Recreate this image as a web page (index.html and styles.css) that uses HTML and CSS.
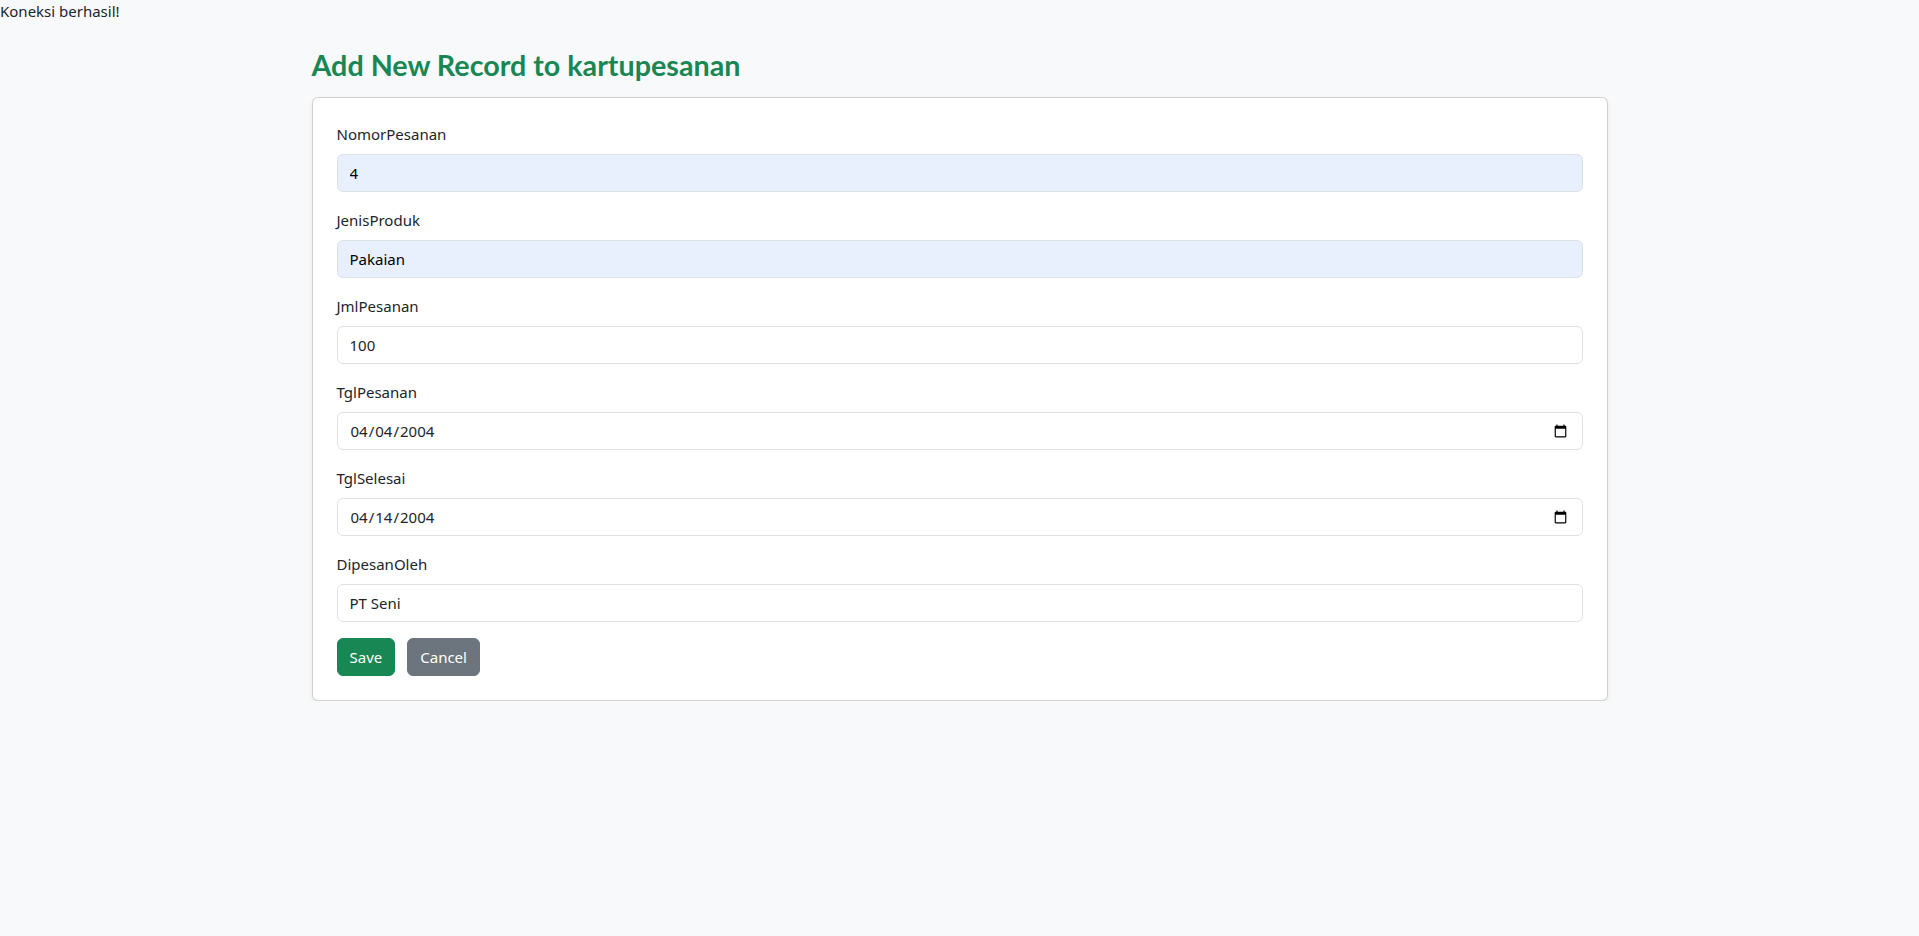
FILE: index.html
```html
<!DOCTYPE html>
<html lang="en">
<head>
<meta charset="utf-8">
<title>Add New Record</title>
<link rel="stylesheet" href="styles.css">
</head>
<body>
<div class="status">Koneksi berhasil!</div>
<div class="container">
  <h2 class="page-title">Add New Record to kartupesanan</h2>
  <form class="card">
    <div class="field">
      <label class="label" for="f1">NomorPesanan</label>
      <input class="input autofill" id="f1" type="text" value="4">
    </div>
    <div class="field">
      <label class="label" for="f2">JenisProduk</label>
      <input class="input autofill" id="f2" type="text" value="Pakaian">
    </div>
    <div class="field">
      <label class="label" for="f3">JmlPesanan</label>
      <input class="input" id="f3" type="text" value="100">
    </div>
    <div class="field">
      <label class="label" for="f4">TglPesanan</label>
      <input class="input" id="f4" type="date" value="2004-04-04">
    </div>
    <div class="field">
      <label class="label" for="f5">TglSelesai</label>
      <input class="input" id="f5" type="date" value="2004-04-14">
    </div>
    <div class="field">
      <label class="label" for="f6">DipesanOleh</label>
      <input class="input" id="f6" type="text" value="PT Seni">
    </div>
    <div class="actions">
      <button type="button" class="btn btn-save">Save</button>
      <button type="button" class="btn btn-cancel">Cancel</button>
    </div>
  </form>
</div>
</body>
</html>
```
FILE: styles.css
```css
* { box-sizing: border-box; }
html, body { margin: 0; }
body {
  background: #f8f9fa;
  color: #212529;
  font-family: "Noto Sans", "Open Sans", sans-serif;
  font-size: 16px;
  line-height: 1.5;
}
.status {
  height: 24px;
  font-size: 15px;
}
.container {
  max-width: 1320px;
  margin: 0 auto;
  padding: 22px 12px 0;
}
.page-title {
  margin: 0 0 13px;
  font-family: Lato, "Noto Sans", sans-serif;
  font-size: 28.7px;
  font-weight: 700;
  line-height: 38px;
  color: #198754;
}
.card {
  display: flex;
  flex-direction: column;
  gap: 16px;
  background: #fff;
  border: 1px solid rgba(0,0,0,.175);
  border-radius: 6px;
  box-shadow: 0 .125rem .25rem rgba(0,0,0,.075);
  padding: 24px;
  margin: 0;
}
.field { display: flex; flex-direction: column; gap: 8px; }
.label {
  font-size: 15px;
  line-height: 24px;
}
.input {
  display: block;
  width: 100%;
  height: 38px;
  padding: 6px 12px;
  font-family: inherit;
  font-size: 15px;
  line-height: 24px;
  color: #212529;
  background: #fff;
  border: 1px solid #dee2e6;
  border-radius: 6px;
  outline: none;
}
.input.autofill {
  background: #e8f0fe;
  color: #000;
}
.actions { display: flex; gap: 12px; }
.btn {
  height: 38px;
  padding: 6px 12px;
  font-family: inherit;
  font-size: 15px;
  line-height: 24px;
  color: #fff;
  border: 1px solid transparent;
  border-radius: 6px;
  cursor: pointer;
}
.btn-save { background: #198754; border-color: #198754; }
.btn-cancel { background: #6c757d; border-color: #6c757d; }
```
